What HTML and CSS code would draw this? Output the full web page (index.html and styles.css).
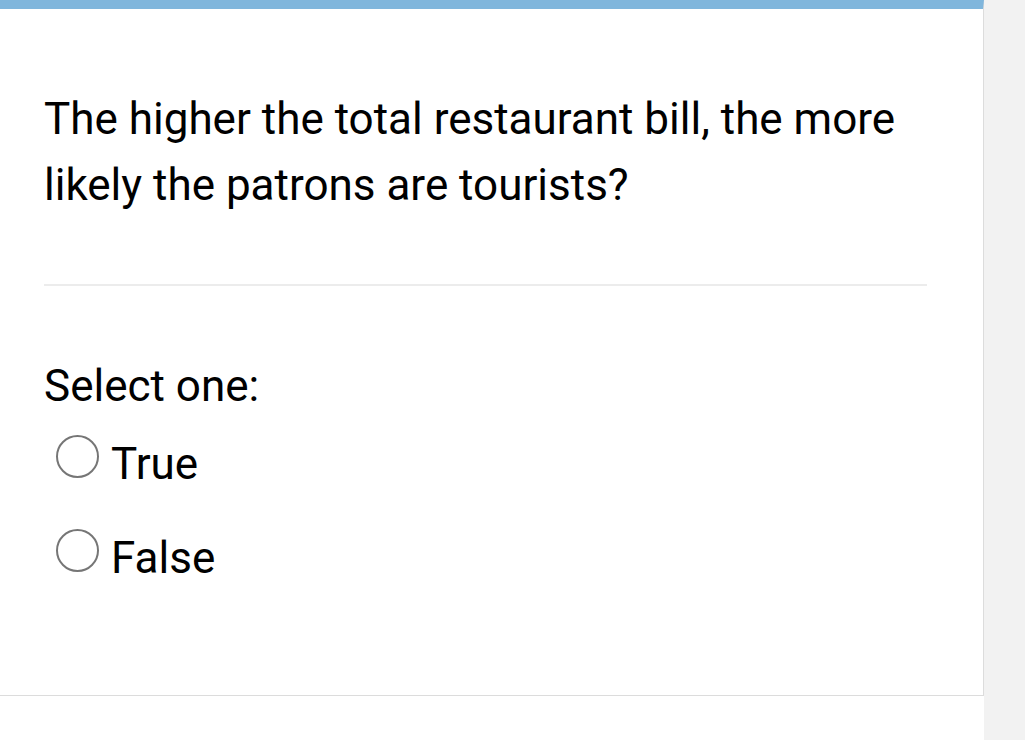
FILE: index.html
```html
<!DOCTYPE html>
<html lang="en">
<head>
    <meta charset="UTF-8">
    <meta name="viewport" content="width=device-width, initial-scale=1.0">
    <title>Question</title>
    <link rel="stylesheet" href="styles.css">
</head>
<body>
    <div class="page">
        <div class="question">
            <div class="qtext">
                The higher the total restaurant bill, the more likely the patrons are tourists?
            </div>
            <hr class="divider">
            <div class="prompt">Select one:</div>
            <div class="answers">
                <label class="answer">
                    <span class="radio"></span>
                    <span class="label">True</span>
                </label>
                <label class="answer">
                    <span class="radio"></span>
                    <span class="label">False</span>
                </label>
            </div>
        </div>
        <div class="side"></div>
    </div>
</body>
</html>
```

FILE: styles.css
```css
body {
    margin: 0;
    background: #fff;
    font-family: Roboto, "Liberation Sans", sans-serif;
    color: #000;
}
.page {
    display: flex;
    height: 740px;
}
.question {
    width: 883px;
    height: 609px;
    padding: 77px 56px 0 44px;
    border-top: 9px solid #80b6dc;
    border-right: 1px solid #dcdcdc;
    border-bottom: 1px solid #dcdcdc;
}
.side {
    flex: 1;
    background: #f2f2f2;
}
.qtext {
    font-size: 44px;
    line-height: 66px;
}
.divider {
    border: 0;
    border-top: 2px solid #ececec;
    margin: 66px 0 0 0;
}
.prompt {
    font-size: 44px;
    line-height: 60px;
    margin-top: 70px;
}
.answers {
    display: flex;
    flex-direction: column;
    gap: 30px;
    margin-top: 16px;
    padding-left: 12px;
}
.answer {
    display: flex;
    align-items: flex-start;
    gap: 12px;
    font-size: 44px;
    line-height: 64px;
}
.radio {
    width: 39px;
    height: 39px;
    margin-top: 3px;
    border: 2.5px solid #767676;
    border-radius: 50%;
}
```
